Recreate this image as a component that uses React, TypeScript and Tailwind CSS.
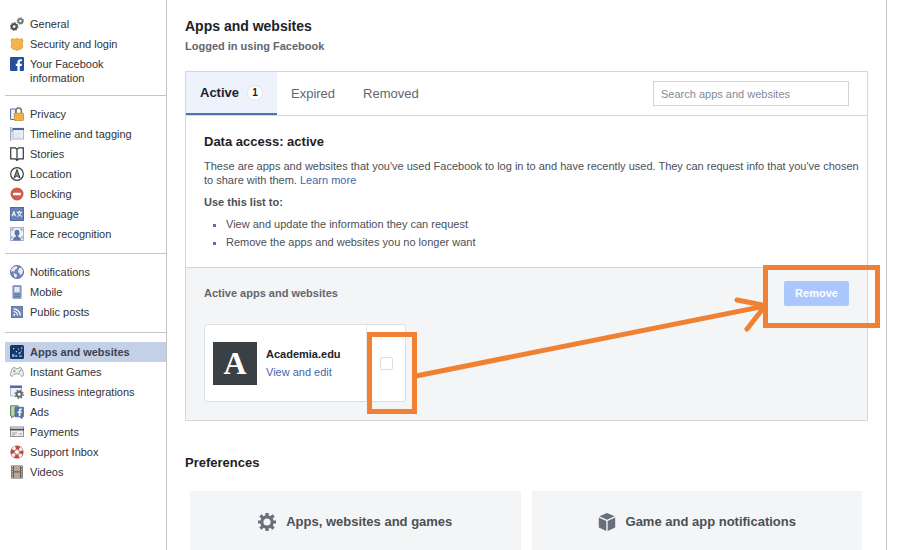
import { useState } from "react";
import type { ReactNode } from "react";

const icons: Record<string, ReactNode> = {
  general: (
    <>
      <circle cx="4.2" cy="9.6" r="2.5" fill="none" stroke="#505356" strokeWidth="2.2" />
      <circle cx="4.2" cy="9.6" r="3.9" fill="none" stroke="#505356" strokeWidth="1" strokeDasharray="1.5 1.5" />
      <circle cx="10.4" cy="4" r="2.1" fill="none" stroke="#74777a" strokeWidth="1.9" />
      <circle cx="10.4" cy="4" r="3.3" fill="none" stroke="#74777a" strokeWidth="1" strokeDasharray="1.3 1.3" />
    </>
  ),
  security: (
    <path d="M2 1.5 4 2.5 7 1.5l3 1 2-1 1 2.3-.8 2.7.6 3.5-1.6 2.2-2.5.3L7 13.5l-1.7-1-2.5-.3L1.2 10l.6-3.5L1 3.8Z" fill="#f3b548" stroke="#d99b3c" strokeWidth=".8" />
  ),
  facebook: (
    <>
      <rect width="14" height="14" rx="1" fill="#27509b" />
      <path d="M7.4 14V9H5.8V6.8h1.6V5.2c0-2 1.1-3 3-3h1.5v2.1h-1c-.8 0-1.1.4-1.1 1.1v1.4H12L11.6 9H9.8v5Z" fill="#fff" />
    </>
  ),
  privacy: (
    <>
      <path d="M.6 2h5v10.5h-5Z" fill="#eef2fb" stroke="#5b6f9d" />
      <path d="M6 7V3.6a2.7 2.7 0 0 1 5.4 0V7" fill="none" stroke="#77736d" strokeWidth="1.5" />
      <rect x="4.3" y="6.2" width="9.2" height="7.2" rx=".6" fill="#f7b84a" stroke="#bb8639" strokeWidth=".8" />
      <path d="M5 8.5h8M5 11h8" stroke="#db9b37" strokeWidth=".7" />
    </>
  ),
  timeline: (
    <>
      <path d="M.8 0v14M.8 4.5 3 3" stroke="#7a8bb5" strokeWidth="1" />
      <rect x="3" y="1.5" width="10.5" height="10.5" fill="#f2f5fb" stroke="#aab4cc" />
      <path d="M2.5 2h11.5" stroke="#4d659d" strokeWidth="2.2" />
      <path d="M4.5 6h7.5M4.5 8h7.5M4.5 10h7.5" stroke="#ccd5e6" strokeWidth=".8" />
    </>
  ),
  stories: (
    <path d="M.7 .8h4.6L7 2.2 8.7 .8h4.6v11H8.7L7 13.5l-1.7-1.7H.7ZM7 2.2v10.6" fill="none" stroke="#33363a" strokeWidth="1.2" />
  ),
  location: (
    <>
      <circle cx="7" cy="7" r="6.3" fill="#fff" stroke="#37393c" strokeWidth="1.2" />
      <path d="M7 2.5 4 11l3-2.2L10 11Z" fill="#8b8e91" stroke="#37393c" strokeWidth="1" />
    </>
  ),
  blocking: (
    <>
      <circle cx="7" cy="7" r="6.5" fill="#ce5b4d" />
      <rect x="3" y="5.8" width="8" height="2.4" rx=".4" fill="#fff" />
    </>
  ),
  language: (
    <>
      <rect x=".5" y=".5" width="13" height="13" fill="#6a7fb5" stroke="#526ba4" />
      <path d="m2 9.2 1.8-4.7L5.6 9.2M2.7 7.7h2.2M6.7 5.2h5.5M9.4 3.8v1.4M7.3 9.4c2-.7 3.3-2 3.8-4.2M7.8 5.4c.6 2 2.2 3.4 4.2 4" fill="none" stroke="#fff" strokeWidth="1" />
    </>
  ),
  face: (
    <>
      <rect x=".5" y=".5" width="13" height="13" fill="#edf1f8" stroke="#a5b3d1" />
      <path d="M2 4V2h2M10 2h2v2M2 9v3M12 9v3" fill="none" stroke="#8093bf" />
      <ellipse cx="7" cy="5.8" rx="2.5" ry="3" fill="#6076a9" />
      <path d="M3 13.5c0-3 1.8-3.5 2.8-3.8V8h2.4v1.7c1 .3 2.8.8 2.8 3.8Z" fill="#6076a9" />
    </>
  ),
  globe: (
    <>
      <circle cx="7" cy="7" r="6.6" fill="#7184b5" stroke="#556b9f" strokeWidth=".8" />
      <path d="M3 2.2 6.5 1l1 1.5-1.2 1.8-1.4.4-.5 2L2.2 6 1 7.2l.2-2.4ZM9 3.2l2.4-.8 1.6 3-.7 3-1.6 2.2-1.3-2.4L7.8 7Zm-5.4 5 2.7.7.8 1.6-1.3 2.6-1.7-1.8Z" fill="#e6ecf7" />
    </>
  ),
  mobile: (
    <>
      <rect x="2.8" y=".5" width="8.4" height="13" rx=".5" fill="#8191b6" stroke="#9aa8c6" />
      <rect x="4.3" y="2" width="5.4" height="5.3" fill="#e1eafa" />
      <path d="M4.4 9.5h1.2M6.4 9.5h1.2M8.4 9.5h1.2M4.4 11.5h1.2M6.4 11.5h1.2M8.4 11.5h1.2" stroke="#536a9d" />
    </>
  ),
  rss: (
    <>
      <rect x="1.4" y="1.4" width="11.2" height="11.2" fill="#7185b7" stroke="#566ca0" strokeWidth=".8" />
      <path d="M3.5 6.5a4 4 0 0 1 4 4M3.5 3.8a6.7 6.7 0 0 1 6.7 6.7" fill="none" stroke="#fff" strokeWidth="1.2" />
      <circle cx="4.3" cy="9.8" r="1" fill="#fff" />
    </>
  ),
  apps: (
    <>
      <rect width="14" height="14" rx="1.5" fill="#153868" />
      <path d="M2 9h2.4v3H2ZM5.2 10h2v2h-2ZM8.5 7h2.2v2.2H8.5ZM9 10.5h3V12H9Z" fill="#7aa5d4" />
      <path d="M3 3h1.2v1.2H3ZM5.8 6H7v1.2H5.8ZM8 3.5h1v1H8ZM11 2.4h1.3v1.3H11ZM10.8 5.6h1v1h-1Z" fill="#c7e2f7" />
    </>
  ),
  games: (
    <>
      <path d="M3 2.8h2.4l.6 1h2l.6-1H11c1.3 1 2.4 4.5 2.4 7 0 1.8-1.7 2-2.6.6L9.5 8.8h-5l-1.3 1.6c-.9 1.4-2.6 1.2-2.6-.6 0-2.5 1.1-6 2.4-7Z" fill="#f3f3f3" stroke="#96999c" />
      <path d="M3 6h2.6M4.3 4.7v2.6" stroke="#85888b" strokeWidth=".9" />
      <circle cx="9.3" cy="6.8" r=".8" fill="#85888b" />
      <circle cx="10.7" cy="5.2" r=".8" fill="#85888b" />
    </>
  ),
  business: (
    <>
      <rect x=".5" y="1" width="11" height="10" fill="#edf1f8" stroke="#b2bed6" />
      <path d="M0 1.8h12" stroke="#526ca7" strokeWidth="2.4" />
      <circle cx="9.2" cy="9.3" r="2.5" fill="#fff" stroke="#686c70" strokeWidth="2" />
      <circle cx="9.2" cy="9.3" r="4" fill="none" stroke="#686c70" strokeWidth="1.3" strokeDasharray="1.6 1.54" />
    </>
  ),
  ads: (
    <>
      <path d="M.6 .8h7.5v10H4.2l-2.6 2v-2h-1Z" fill="#b9d5aa" stroke="#4d8655" />
      <path d="M5 2.2h8.5v9.6H12v2l-2.3-2H5Z" fill="#5673aa" stroke="#486395" strokeWidth=".7" />
      <path d="M8.8 11V8H7.6V6.5h1.2v-1C8.8 4 9.6 3.4 10.8 3.4h1V5h-.7c-.5 0-.7.2-.7.7v.8h1.4L11.5 8h-1.1v3Z" fill="#fff" />
    </>
  ),
  payments: (
    <>
      <rect x=".5" y="2" width="13" height="9.5" fill="#ededeb" stroke="#8f9194" />
      <path d="M0 4.6h14" stroke="#4c5054" strokeWidth="1.8" />
      <path d="M2 8h5M2 9.8h3M9 9h3" stroke="#9b9da0" />
    </>
  ),
  support: (
    <>
      <circle cx="7" cy="7" r="4.6" fill="none" stroke="#b84a40" strokeWidth="4" />
      <circle cx="7" cy="7" r="4.6" fill="none" stroke="#f7eeee" strokeWidth="3.2" strokeDasharray="3.2 4.03" strokeDashoffset="-2" />
      <circle cx="7" cy="7" r="2.4" fill="#fff" stroke="#a5483f" strokeWidth=".6" />
    </>
  ),
  videos: (
    <>
      <rect x="1.2" y=".5" width="11.6" height="13" fill="#6a615c" />
      <path d="M4 1h6v5.3H4ZM4 7.6h6v5.4H4Z" fill="#b3a69c" />
      <path d="M2.5 1v12.5M11.5 1v12.5" stroke="#d4ccc6" strokeWidth="1" strokeDasharray="1.3 1.3" />
    </>
  ),
};

type Item = { icon: string; label: string };

const groups: { spacing: string; items: Item[] }[] = [
  {
    spacing: "",
    items: [
      { icon: "general", label: "General" },
      { icon: "security", label: "Security and login" },
      { icon: "facebook", label: "Your Facebook information" },
    ],
  },
  {
    spacing: "mt-[7px] border-t pt-2",
    items: [
      { icon: "privacy", label: "Privacy" },
      { icon: "timeline", label: "Timeline and tagging" },
      { icon: "stories", label: "Stories" },
      { icon: "location", label: "Location" },
      { icon: "blocking", label: "Blocking" },
      { icon: "language", label: "Language" },
      { icon: "face", label: "Face recognition" },
    ],
  },
  {
    spacing: "mt-[9px] border-t pt-2",
    items: [
      { icon: "globe", label: "Notifications" },
      { icon: "mobile", label: "Mobile" },
      { icon: "rss", label: "Public posts" },
    ],
  },
  {
    spacing: "mt-[10px] border-t pt-[9px]",
    items: [
      { icon: "apps", label: "Apps and websites" },
      { icon: "games", label: "Instant Games" },
      { icon: "business", label: "Business integrations" },
      { icon: "ads", label: "Ads" },
      { icon: "payments", label: "Payments" },
      { icon: "support", label: "Support Inbox" },
      { icon: "videos", label: "Videos" },
    ],
  },
];

function Sidebar() {
  return (
    <nav aria-label="Settings" className="w-[167px] shrink-0 border-r border-[#c4c4c4] pt-3.5 pl-[5px]">
      {groups.map(({ spacing, items }, i) => (
        <ul key={i} className={`border-[#c4c4c4] ${spacing}`}>
          {items.map(({ icon, label }) => {
            const current = label === "Apps and websites";
            return (
              <li key={label}>
                <a
                  href="#"
                  aria-current={current ? "page" : undefined}
                  className={`flex min-h-5 items-start gap-1.5 py-[3px] pl-[5px] text-[11px] leading-[14px] ${
                    current ? "bg-[#c3d0e7] font-bold text-[#3a4250]" : "text-[#303338]"
                  }`}
                >
                  <svg viewBox="0 0 14 14" className="size-3.5 shrink-0" aria-hidden="true">
                    {icons[icon]}
                  </svg>
                  <span className="max-w-28">{label}</span>
                </a>
              </li>
            );
          })}
        </ul>
      ))}
    </nav>
  );
}

function GearIcon() {
  return (
    <svg viewBox="0 0 18 18" className="size-[18px]" aria-hidden="true">
      <circle cx="9" cy="9" r="5.2" fill="none" stroke="#686f7c" strokeWidth="3.2" />
      <path d="M9 0v4M9 14v4M0 9h4M14 9h4M2.4 2.4l3 3M12.6 12.6l3 3M15.6 2.4l-3 3M5.4 12.6l-3 3" stroke="#686f7c" strokeWidth="3.2" />
    </svg>
  );
}

function CubeIcon() {
  return (
    <svg viewBox="0 0 18 18" className="size-[18px]" aria-hidden="true">
      <path d="m9 0 7.6 3.2L9 6.7 1.4 3.2Z" fill="#686f7c" />
      <path d="M.8 4.5 8.3 8v10L.8 14.5Z" fill="#686f7c" />
      <path d="M17.2 4.5 9.7 8v10l7.5-3.5Z" fill="#686f7c" />
    </svg>
  );
}

export default function App() {
  const [checked, setChecked] = useState(false);
  return (
    <div className="flex min-h-screen bg-white pr-[37px] font-['Liberation_Sans',Arial,sans-serif] text-[#4b4f56]">
      <Sidebar />
      <main className="min-w-0 flex-1 border-r border-[#c4c4c4] pt-4 pr-[18px] pl-[18px]">
        <h1 className="text-[14px] leading-5 font-bold text-[#1d2129]">Apps and websites</h1>
        <p className="mt-[3px] text-[11px] leading-3.5 font-bold text-[#616770]">Logged in using Facebook</p>

        <section className="mt-[18px] border border-[#d5d7da]">
          <div className="flex h-11 items-stretch border-b border-[#d5d7da] pr-[18px]">
            <button className="flex w-[91px] items-center border-b-2 border-[#4a76b0] bg-[#edf2fd] pl-3.5 text-[13px] font-bold text-[#1d2129]">
              Active
              <span className="ml-2 flex size-4 items-center justify-center rounded-full border border-[#e4e2df] bg-white text-[10px]">
                1
              </span>
            </button>
            <button className="px-3.5 text-[13px] text-[#606770]">Expired</button>
            <button className="px-3.5 text-[13px] text-[#606770]">Removed</button>
            <input
              type="search"
              aria-label="Search apps and websites"
              placeholder="Search apps and websites"
              className="my-auto ml-auto h-[25px] w-49 border border-[#d2d4d8] px-[7px] text-[11px] placeholder:text-[#858a93]"
            />
          </div>

          <div className="pt-4 pr-1 pb-4 pl-[18px] text-[11px] leading-3.5">
            <h2 className="text-[13px] leading-5 font-bold text-[#1d2129]">Data access: active</h2>
            <p className="mt-[7px]">
              These are apps and websites that you've used Facebook to log in to and have recently used. They can
              request info that you've chosen to share with them.{" "}
              <a href="#" className="text-[#4267b2]">
                Learn more
              </a>
            </p>
            <h3 className="mt-2 font-bold">Use this list to:</h3>
            <ul className="mt-1.5 list-[square] pl-[22px] leading-[18px] marker:text-[#5473ad]">
              <li>View and update the information they can request</li>
              <li>Remove the apps and websites you no longer want</li>
            </ul>
          </div>

          <div className="relative border-t border-[#d5d7da] bg-[#f4f5f7] px-[18px] pt-[13px] pb-[18px]">
            <div className="flex items-center justify-between">
              <h3 className="text-[11px] font-bold text-[#616770]">Active apps and websites</h3>
              <button className="h-[25px] w-[65px] rounded-xs bg-[#abc7fd] text-[11px] font-bold text-white">
                Remove
              </button>
            </div>
            <div className="mt-[18px] flex h-[78px] w-[202px] rounded-[3px] border border-[#dcdee2] bg-white">
              <div className="flex flex-1 items-center gap-[9px] pl-2">
                <svg viewBox="0 0 44 43" className="h-[43px] w-11 shrink-0" role="img" aria-label="Academia.edu logo">
                  <rect width="44" height="43" fill="#3b4044" />
                  <text
                    x="22"
                    y="32"
                    textAnchor="middle"
                    fill="#fff"
                    fontSize="32"
                    fontWeight="700"
                    fontFamily="'Liberation Serif', serif"
                  >
                    A
                  </text>
                </svg>
                <div className="text-[11px] leading-[18px]">
                  <p className="font-bold text-[#1d2129]">Academia.edu</p>
                  <a href="#" className="text-[#4267b2]">
                    View and edit
                  </a>
                </div>
              </div>
              <label className="flex w-[39px] items-center justify-center border-l border-[#e6e8ec]">
                <input
                  type="checkbox"
                  aria-label="Select Academia.edu"
                  checked={checked}
                  onChange={(e) => setChecked(e.target.checked)}
                  className="size-[13px] appearance-none rounded-xs border border-[#dcdde0] bg-white checked:bg-[#4267b2]"
                />
              </label>
            </div>
            <svg
              viewBox="0 0 700 160"
              className="pointer-events-none absolute -top-1 left-0 h-40 w-[700px]"
              fill="none"
              stroke="#f08132"
              strokeWidth="5"
              aria-hidden="true"
            >
              <rect x="183.5" y="70.5" width="45" height="77" />
              <rect x="579.5" y="3.5" width="112" height="58" />
              <path d="M230 112 579 42" />
              <path d="M551 36 579 41.5M561 65 579 42" strokeLinecap="round" />
            </svg>
          </div>
        </section>

        <h2 className="mt-8 text-[13px] leading-5 font-bold text-[#1d2129]">Preferences</h2>
        <div className="mt-[18px] grid grid-cols-2 gap-[11px] pr-1.5 pl-[5px]">
          <button className="flex h-[62px] items-center justify-center gap-2.5 bg-[#f4f5f7] text-[13px] font-bold">
            <GearIcon />
            Apps, websites and games
          </button>
          <button className="flex h-[62px] items-center justify-center gap-2.5 bg-[#f4f5f7] text-[13px] font-bold">
            <CubeIcon />
            Game and app notifications
          </button>
        </div>
      </main>
    </div>
  );
}
